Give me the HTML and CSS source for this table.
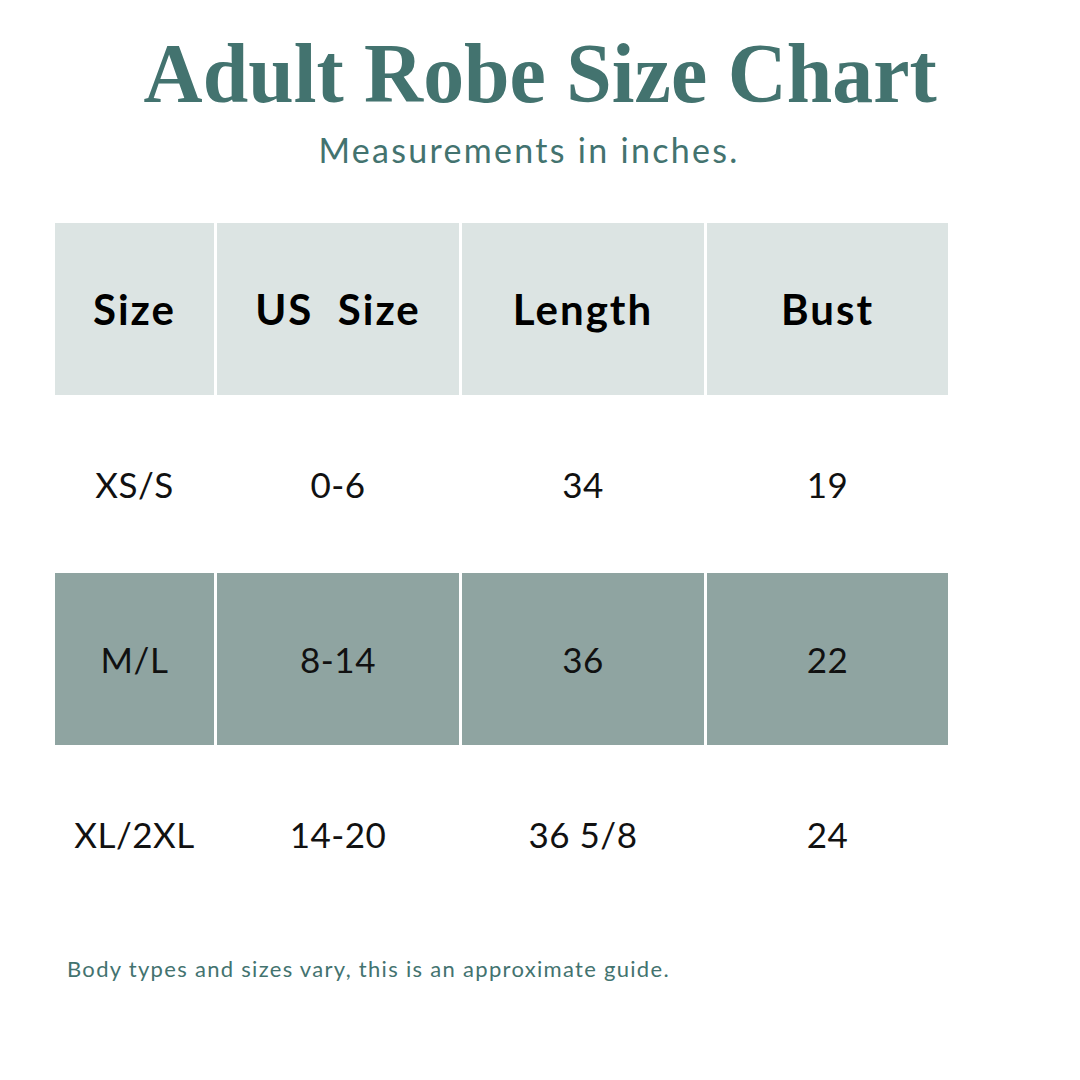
FILE: index.html
```html
<!DOCTYPE html>
<html lang="en">
<head>
<meta charset="utf-8">
<title>Adult Robe Size Chart</title>
<link rel="stylesheet" href="styles.css">
</head>
<body>
<div class="page">
  <header class="head">
    <h1 class="title">Adult Robe Size Chart</h1>
    <p class="subtitle">Measurements in inches.</p>
  </header>
  <div class="chart">
    <div class="cell th">Size</div>
    <div class="cell th">US&nbsp; Size</div>
    <div class="cell th">Length</div>
    <div class="cell th">Bust</div>

    <div class="cell">XS/S</div>
    <div class="cell">0-6</div>
    <div class="cell">34</div>
    <div class="cell">19</div>

    <div class="cell dark">M/L</div>
    <div class="cell dark">8-14</div>
    <div class="cell dark">36</div>
    <div class="cell dark">22</div>

    <div class="cell">XL/2XL</div>
    <div class="cell">14-20</div>
    <div class="cell">36 5/8</div>
    <div class="cell">24</div>
  </div>
  <p class="note">Body types and sizes vary, this is an approximate guide.</p>
</div>
</body>
</html>
```

FILE: styles.css
```css
html, body {
  margin: 0;
  padding: 0;
  background: #ffffff;
}
.page {
  width: 1080px;
  height: 1080px;
  overflow: hidden;
  display: flex;
  flex-direction: column;
}
.head {
  display: flex;
  flex-direction: column;
  align-items: center;
  padding-top: 28px;
}
.title {
  margin: 0;
  font-family: "Liberation Serif", serif;
  font-weight: 700;
  font-size: 84px;
  line-height: 92px;
  color: #43736f;
  letter-spacing: 0;
  transform: scaleX(0.974);
}
.subtitle {
  margin: 10px 0 0 0;
  font-family: "Lato", sans-serif;
  font-weight: 400;
  font-size: 34px;
  line-height: 40px;
  letter-spacing: 2.3px;
  color: #43736f;
  padding-right: 22px;
}
.chart {
  margin: 53px 0 0 55px;
  display: grid;
  grid-template-columns: 159px 242px 242px 241px;
  grid-auto-rows: 172px;
  gap: 3px;
}
.cell {
  display: flex;
  align-items: center;
  justify-content: center;
  font-family: "Lato", sans-serif;
  font-weight: 400;
  font-size: 35px;
  color: #111111;
  letter-spacing: 0.5px;
}
.th {
  background: #dce4e3;
  font-weight: 700;
  font-size: 42px;
  color: #000000;
  letter-spacing: 2px;
}
.dark {
  background: #8fa4a1;
}
.note {
  margin: 35px 0 0 67px;
  font-family: "Lato", sans-serif;
  font-size: 22px;
  line-height: 28px;
  letter-spacing: 1.3px;
  color: #43736f;
}
```
